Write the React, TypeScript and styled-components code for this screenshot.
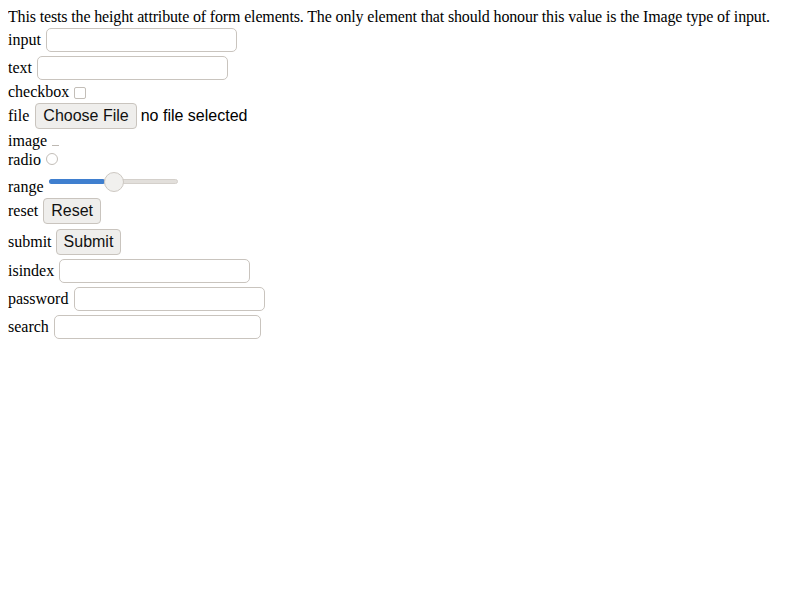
import React from "react";
import styled, { createGlobalStyle } from "styled-components";

const Global = createGlobalStyle`
  html, body { background: #ffffff; }
  body {
    margin: 8px;
    font-family: "Liberation Serif", "Times New Roman", serif;
    font-size: 16px;
    color: #000;
  }
`;

const Page = styled.div`
  display: flex;
  flex-direction: column;
`;

const Intro = styled.p`
  margin: 0;
  line-height: 18.4px;
  letter-spacing: -0.15px;
`;

const Row = styled.div<{ $gap?: number; $top?: number }>`
  display: flex;
  align-items: baseline;
  gap: ${(p) => p.$gap ?? 5}px;
  margin-top: ${(p) => p.$top ?? 0}px;
  line-height: 18.4px;
`;

const Label = styled.span``;

const TextBox = styled.input<{ $w?: number }>`
  box-sizing: border-box;
  width: ${(p) => p.$w ?? 191}px;
  height: 24px;
  margin: 2px 0;
  padding: 1px 4px;
  border: 1px solid #c9c4be;
  border-radius: 5px;
  background: #fff;
  font-family: "Liberation Sans", Arial, sans-serif;
  font-size: 16px;
  outline: none;
`;

const Check = styled.span`
  display: inline-block;
  box-sizing: border-box;
  width: 12px;
  height: 12px;
  border: 1px solid #c3beb8;
  border-radius: 2px;
  background: #fff;
  align-self: center;
`;

const Button = styled.button<{ $mt?: number }>`
  box-sizing: border-box;
  height: 26px;
  margin: ${(p) => p.$mt ?? 2}px 0 2px;
  padding: 0 7px;
  border: 1px solid #c9c4be;
  border-radius: 4px;
  background: #efeeec;
  font-family: "Liberation Sans", Arial, sans-serif;
  font-size: 16px;
  line-height: 24px;
  color: #111;
`;

const FileWrap = styled.span`
  display: inline-flex;
  align-items: baseline;
  gap: 4px;
  font-family: "Liberation Sans", Arial, sans-serif;
  font-size: 16px;
`;

const ImageStub = styled.span`
  display: inline-block;
  width: 7px;
  height: 1px;
  background: #bdb8b2;
`;

const Radio = styled.span`
  display: inline-block;
  box-sizing: border-box;
  width: 12px;
  height: 12px;
  border: 1px solid #c3beb8;
  border-radius: 50%;
  background: #fff;
  margin-bottom: 1px;
`;

const RangeWrap = styled.span`
  position: relative;
  display: inline-block;
  width: 129px;
  height: 20px;
  margin-top: 2px;
`;

const Track = styled.span`
  position: absolute;
  left: 0;
  right: 0;
  top: 7px;
  height: 5px;
  border-radius: 3px;
  background: #e2dfdb;
  border: 1px solid #d4d0cb;
  box-sizing: border-box;
`;

const Fill = styled.span`
  position: absolute;
  left: 0;
  top: 7px;
  height: 5px;
  border-radius: 3px;
  background: #3f7fcf;
`;

const Thumb = styled.span`
  position: absolute;
  top: 0;
  width: 20px;
  height: 20px;
  box-sizing: border-box;
  border-radius: 50%;
  border: 1px solid #cdc8c2;
  background: #f1f0ee;
`;

export default function App() {
  const value = 0.5;
  return (
    <>
      <Global />
      <Page>
        <Intro>
          This tests the height attribute of form elements. The only element
          that should honour this value is the Image type of input.
        </Intro>
        <Row>
          <Label>input</Label>
          <TextBox type="text" />
        </Row>
        <Row>
          <Label>text</Label>
          <TextBox type="text" />
        </Row>
        <Row $top={1}>
          <Label>checkbox</Label>
          <Check />
        </Row>
        <Row $gap={6}>
          <Label>file</Label>
          <FileWrap>
            <Button type="button" $mt={1}>Choose File</Button>
            no file selected
          </FileWrap>
        </Row>
        <Row $top={1}>
          <Label>image</Label>
          <ImageStub />
        </Row>
        <Row $top={1}>
          <Label>radio</Label>
          <Radio />
        </Row>
        <Row>
          <Label>range</Label>
          <RangeWrap>
            <Track />
            <Fill style={{ width: `${value * 129 - 8}px` }} />
            <Thumb style={{ left: `${value * 109 + 1}px` }} />
          </RangeWrap>
        </Row>
        <Row>
          <Label>reset</Label>
          <Button type="button">Reset</Button>
        </Row>
        <Row $gap={4} $top={1}>
          <Label>submit</Label>
          <Button type="button">Submit</Button>
        </Row>
        <Row>
          <Label>isindex</Label>
          <TextBox type="text" />
        </Row>
        <Row $gap={6}>
          <Label>password</Label>
          <TextBox type="password" />
        </Row>
        <Row>
          <Label>search</Label>
          <TextBox type="text" $w={207} />
        </Row>
      </Page>
    </>
  );
}
